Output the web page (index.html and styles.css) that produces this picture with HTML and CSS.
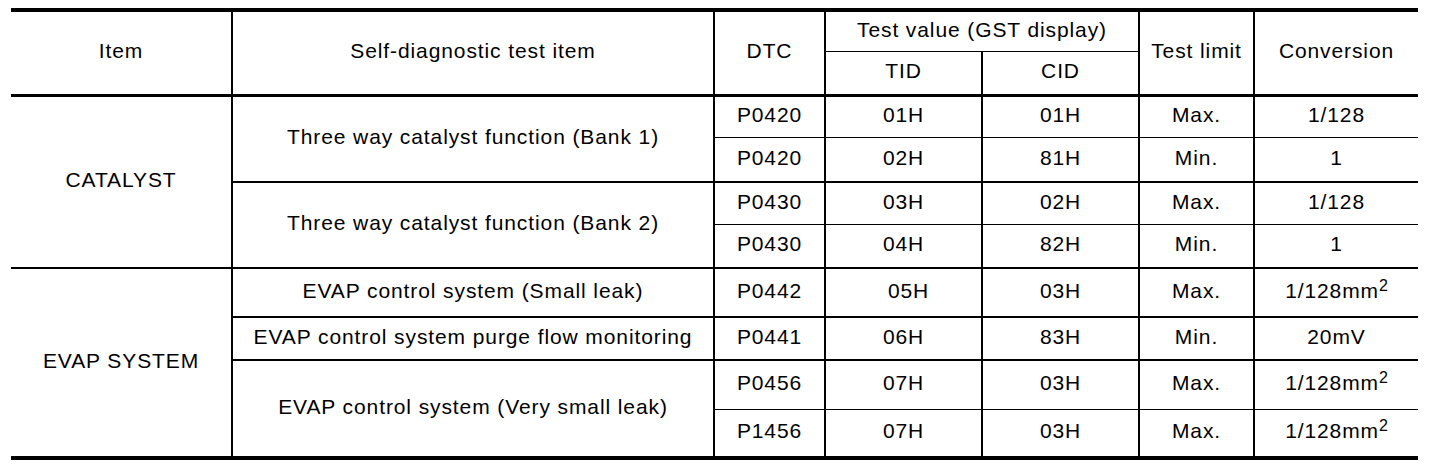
FILE: index.html
```html
<!DOCTYPE html>
<html lang="en">
<head>
<meta charset="utf-8">
<title>Self-diagnostic test items</title>
<link rel="stylesheet" href="styles.css">
</head>
<body>
<div class="table">
  <div class="c br b3 rs2">Item</div>
  <div class="c br b3 rs2">Self-diagnostic test item</div>
  <div class="c br b3 rs2">DTC</div>
  <div class="c br b1 cs2">Test value (GST display)</div>
  <div class="c br b3 rs2">Test limit</div>
  <div class="c b3 rs2">Conversion</div>
  <div class="c br b3">TID</div>
  <div class="c br b3">CID</div>

  <div class="c br b2 rs4">CATALYST</div>
  <div class="c br b2 rs2">Three way catalyst function (Bank 1)</div>
  <div class="c br b1">P0420</div>
  <div class="c br b1">01H</div>
  <div class="c br b1">01H</div>
  <div class="c br b1">Max.</div>
  <div class="c b1">1/128</div>
  <div class="c br b2">P0420</div>
  <div class="c br b2">02H</div>
  <div class="c br b2">81H</div>
  <div class="c br b2">Min.</div>
  <div class="c b2">1</div>

  <div class="c br b2 rs2">Three way catalyst function (Bank 2)</div>
  <div class="c br b1">P0430</div>
  <div class="c br b1">03H</div>
  <div class="c br b1">02H</div>
  <div class="c br b1">Max.</div>
  <div class="c b1">1/128</div>
  <div class="c br b2">P0430</div>
  <div class="c br b2">04H</div>
  <div class="c br b2">82H</div>
  <div class="c br b2">Min.</div>
  <div class="c b2">1</div>

  <div class="c br rs4">EVAP SYSTEM</div>
  <div class="c br b2">EVAP control system (Small leak)</div>
  <div class="c br b2">P0442</div>
  <div class="c br b2 nudge">05H</div>
  <div class="c br b2">03H</div>
  <div class="c br b2">Max.</div>
  <div class="c b2">1/128mm<sup>2</sup></div>

  <div class="c br b2">EVAP control system purge flow monitoring</div>
  <div class="c br b2">P0441</div>
  <div class="c br b2">06H</div>
  <div class="c br b2">83H</div>
  <div class="c br b2">Min.</div>
  <div class="c b2">20mV</div>

  <div class="c br rs2">EVAP control system (Very small leak)</div>
  <div class="c br b1">P0456</div>
  <div class="c br b1">07H</div>
  <div class="c br b1">03H</div>
  <div class="c br b1">Max.</div>
  <div class="c b1">1/128mm<sup>2</sup></div>
  <div class="c br">P1456</div>
  <div class="c br">07H</div>
  <div class="c br">03H</div>
  <div class="c br">Max.</div>
  <div class="c">1/128mm<sup>2</sup></div>
</div>
</body>
</html>
```
FILE: styles.css
```css
html, body {
  margin: 0;
  padding: 0;
  background: #fff;
}

body {
  font-family: "Liberation Sans", Arial, Helvetica, sans-serif;
  font-size: 21px;
  letter-spacing: 0.9px;
  color: #000;
}

.table {
  display: grid;
  grid-template-columns: 222px 482px 111px 157px 157px 115px 163px;
  grid-template-rows: 40px 45px 41px 45px 42px 44px 49px 43px 49px 46px;
  width: 1407px;
  margin: 8px 0 0 11px;
  border-top: 4px solid #000;
  border-bottom: 4px solid #000;
}

.c {
  box-sizing: border-box;
  display: flex;
  align-items: center;
  justify-content: center;
  text-align: center;
  white-space: nowrap;
  padding-bottom: 4px;
}

.br { border-right: 2px solid #000; }
.b1 { border-bottom: 1px solid #000; }
.b2 { border-bottom: 2px solid #000; }
.b3 { border-bottom: 3px solid #000; }

.rs2 { grid-row: span 2; }
.rs4 { grid-row: span 4; }
.cs2 { grid-column: span 2; }

.nudge { padding-left: 10px; }

sup {
  font-size: 16px;
  line-height: 0;
  position: relative;
  top: -5px;
  vertical-align: super;
  letter-spacing: 0;
}
```
